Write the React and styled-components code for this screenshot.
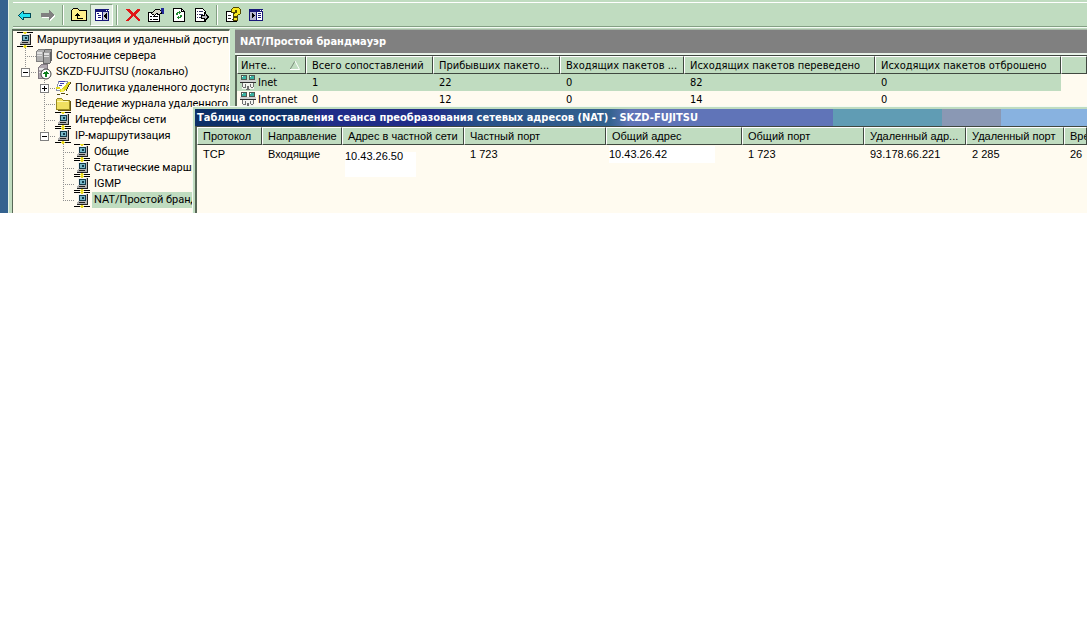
import React from "react";
import styled, { createGlobalStyle, css } from "styled-components";

const GlobalStyle = createGlobalStyle`
  * {
    box-sizing: border-box;
  }
  body {
    margin: 0;
    background: #fff;
    color: #000;
    font-family: "DejaVu Sans Condensed", "DejaVu Sans", sans-serif;
    font-size: 11px;
    line-height: 16px;
  }
`;

/* ICONS */
const Svg = ({ children }) => (
  <svg
    width="16"
    height="16"
    viewBox="0 0 16 16"
    shapeRendering="crispEdges"
    aria-hidden="true"
  >
    {children}
  </svg>
);

const BackIcon = () => (
  <Svg>
    <path d="M1 8h1v-1h1v-1h1v-1h1v-1h2v2h7v5h-7v2h-2v-1h-1v-1h-1v-1h-1v-1h-1z" fill="#004858" />
    <path d="M2 8h1v-1h1v-1h1v-1h1v2h7v3h-7v2h-1v-1h-1v-1h-1v-1h-1z" fill="#20e0f0" />
  </Svg>
);

const ForwardIcon = () => (
  <Svg>
    <path d="M15 9 L10 4 V7 H2 V11 H10 V14 Z" fill="#fff" />
    <path d="M14 8 L9 3 V6 H1 V10 H9 V13 Z" fill="#808080" />
  </Svg>
);

const UpIcon = () => (
  <Svg>
    <path d="M0.5 13.5 V3.5 L2.5 1.5 H6.5 L8.5 3.5 H15.5 V13.5 Z" fill="#fff08c" stroke="#000" />
    <path d="M4 8h1v-1h1v-1h1v1h1v1h1v1h-2v2h5v1h-6v-3h-2z" fill="#000" />
  </Svg>
);

const PaneIcon = ({ flip }) => (
  <Svg>
    <rect x="1" y="2" width="14" height="12" fill="#181878" />
    <path d="M12 3h1v1h-1zM14 3h1v1h-1z" fill="#fff" />
    {flip ? (
      <>
        <path d="M2 5h6v8h-6z" fill="#b8b8d0" />
        <path d="M9 5h5v8h-5z" fill="#fff" />
        <path d="M4 6h1v1h1v1h1v1h-1v1h-1v1h-1z" fill="#000" />
        <path d="M10 6h3v1h-3zM10 8h3v1h-3zM10 10h3v1h-3z" fill="#181878" />
      </>
    ) : (
      <>
        <path d="M2 5h6v8h-6z" fill="#fff" />
        <path d="M9 5h5v8h-5z" fill="#c8c8d8" />
        <path d="M3 6h2v1h-2zM4 8h3v1h-3zM4 10h3v1h-3z" fill="#181878" />
        <path d="M12 6h1v6h-1v-1h-1v-1h-1v-2h1v-1h1z" fill="#000" />
      </>
    )}
  </Svg>
);

const DeleteIcon = () => (
  <Svg>
    <path
      d="M1 2h3l4 4l4-4h3v1l-5 5l5 5v1h-2l-5-5l-5 5h-2v-1l5-5l-5-5z"
      fill="#e01818"
    />
  </Svg>
);

const PropertiesIcon = () => (
  <Svg>
    <path d="M0.5 5.5h11v9h-11z" fill="#fff" stroke="#000" />
    <path d="M2 9h2v1h-2zM5 9h5v1h-5zM2 12h2v1h-2zM5 12h5v1h-5z" fill="#000" />
    <path d="M3.5 6.5 L7.5 2.5 H11.5 L13.5 4.5 V6.5 L10.5 7.5 L8.5 6.5 L6.5 8.5 Z" fill="#d8d8c8" stroke="#000" />
    <path d="M13 1h3v6h-2v-2h-1z" fill="#202898" />
  </Svg>
);

const RefreshIcon = () => (
  <Svg>
    <path d="M2.5 1.5h8l3 3v10h-11z" fill="#fff" stroke="#000" />
    <path d="M10.5 1.5v3h3" fill="none" stroke="#000" />
    <path d="M5 8v-2h1v-1h2v-1h1v1h1v1h-1v1h-1v-1h-1v2zM11 8v2h-1v1h-2v1h-1v-1h-1v-1h1v-1h1v1h1v-2z" fill="#208830" />
  </Svg>
);

const ExportIcon = () => (
  <Svg>
    <path d="M1.5 1.5h7l3 3v10h-10z" fill="#fff" stroke="#000" />
    <path d="M3 4h1v1h-1zM5 4h4v1h-4zM3 7h1v1h-1zM5 7h4v1h-4zM3 10h1v1h-1zM5 10h3v1h-3z" fill="#303060" />
    <path d="M7.5 8.5h3v-3l4 4.5l-4 4v-2.5h-3z" fill="#b8b8c0" stroke="#000" />
  </Svg>
);

const HelpIcon = () => (
  <Svg>
    <path d="M1.5 4.5h10v10h-10z" fill="#fff" stroke="#000" />
    <path d="M3 8h3v1h-3zM3 11h3v1h-3zM7 12h3v1h-3z" fill="#303030" />
    <path
      d="M6.5 5.5v-3l2-2h5l2 2v4l-3 2v1h-4v-3l3-1v-2h-1v2z"
      fill="#f8e820"
      stroke="#504800"
    />
    <path d="M8.5 10.5h4v3h-4z" fill="#f8e820" stroke="#504800" />
  </Svg>
);

const NetworkIcon = () => (
  <Svg>
    <path d="M0 0h16v1h-16zM0 14h16v1h-16z" fill="#000" />
    <path d="M6 0h4v1h-4zM7 1h2v1h-2zM7 13h2v1h-2zM6 14h4v1h-4zM7 15h2v1h-2z" fill="#e8d820" />
    <path d="M4 2h9v8h-9z" fill="#b8b8b8" />
    <path d="M4 2h8v1h-8zM4 3h1v6h-1z" fill="#f0f0f0" />
    <path d="M5 3h7v6h-7z" fill="#103848" />
    <path d="M6 4h5v4h-5z" fill="#78b8c8" />
    <path d="M8 5h2v2h-2z" fill="#103848" />
    <path d="M13 2h1v8h-1z" fill="#202020" />
    <path d="M3 10h10v2h-10z" fill="#b0b0b0" />
    <path d="M5 10h6v1h-6zM3 12h11v1h-11zM13 10h1v2h-1z" fill="#202020" />
  </Svg>
);

const ServersIcon = () => (
  <Svg>
    <path d="M0.5 3.5l2-2h6v10l-2 2h-6z" fill="#b0b0b0" stroke="#808080" />
    <path d="M7.5 4.5l2-3h6v11l-2 3h-6z" fill="#a0a0a0" stroke="#686868" />
    <path d="M1 4h5v2h-5zM1 7h5v1h-5zM8 5h5v2h-5zM8 8h5v1h-5z" fill="#e0e0e0" />
    <path d="M14 4h1v9h-1z" fill="#606060" />
  </Svg>
);

const ServerIcon = () => (
  <Svg>
    <path d="M2.5 3.5l3-3h6v10l-3 4h-6z" fill="#b0a8b0" stroke="#807880" />
    <path d="M3 4h5v2h-5zM3 8h3v1h-3z" fill="#e8e8e8" />
    <circle cx="10" cy="10" r="5" fill="#fff" stroke="#404040" shapeRendering="auto" />
    <path d="M10 7h1v1h1v1h1v1h-2v3h-2v-3h-2v-1h1v-1h2z" fill="#108020" />
  </Svg>
);

const PolicyIcon = () => (
  <Svg>
    <path d="M3.5 1.5h9l-3 9h-8z" fill="#fff" stroke="#8890a8" />
    <path d="M4 1h6v1h-6zM5 3h4v1h-4zM4 5h3v1h-3z" fill="#4040b0" />
    <path d="M1 7h4v2h2l6-7h2v2l-6 8h-4v-3h-4z" fill="#e0d820" />
    <path d="M6 9h3v3h-3z" fill="#f8f060" />
    <path d="M15 2h1v2h-1v1h-1v2h-1v2h-1v2h-1v-2h1v-2h1v-2h1v-1h1zM2 14h3v1h-3zM6 13h4v1h-4zM11 14h2v1h-2z" fill="#504810" />
  </Svg>
);

const FolderIcon = () => (
  <Svg>
    <path d="M1.5 13.5v-10l1-1h4l2 2h6v9z" fill="#f0e060" stroke="#988820" />
    <path d="M2 5h11v1h-11z" fill="#fff8b0" />
    <path d="M15 5h1v10h-13v-1h12z" fill="#605010" />
  </Svg>
);

const InterfaceIcon = () => (
  <Svg>
    <path d="M1 0h6v5h-6zM9 0h6v5h-6z" fill="#505850" />
    <path d="M2 1h4v3h-4zM10 1h4v3h-4z" fill="#38b0a0" />
    <path d="M2 1h1v1h-1zM10 1h1v1h-1z" fill="#fff" />
    <path d="M0 5h16v2h-16z" fill="#d0d0d0" />
    <path d="M0 7h16v1h-16z" fill="#303030" />
    <path d="M2 8h12v6h-12z" fill="#f4f4f0" />
    <path d="M2 8h1v4h-1zM13 8h1v4h-1zM5 9h1v3h-1zM10 9h1v3h-1zM3 12h3v1h-3zM11 12h2v1h-2zM7 11h2v3h-2zM6 14h4v1h-4z" fill="#707070" />
  </Svg>
);

const SortArrow = () => (
  <svg width="10" height="9" viewBox="0 0 10 9" aria-hidden="true">
    <path d="M5 0 L0 8.5" stroke="#7c8c7c" fill="none" />
    <path d="M5 0 L9.5 8.5 H0" stroke="#fff" fill="none" />
  </svg>
);

/* DATA */
const tools = [
  { label: "Назад", icon: <BackIcon /> },
  { label: "Вперед", icon: <ForwardIcon /> },
  null,
  { label: "Вверх", icon: <UpIcon /> },
  { label: "Дерево консоли", icon: <PaneIcon />, pressed: true },
  null,
  { label: "Удалить", icon: <DeleteIcon /> },
  { label: "Свойства", icon: <PropertiesIcon /> },
  { label: "Обновить", icon: <RefreshIcon /> },
  { label: "Экспорт", icon: <ExportIcon /> },
  null,
  { label: "Справка", icon: <HelpIcon /> },
  { label: "Панель действий", icon: <PaneIcon flip /> },
];

const nodes = [
  { level: 0, text: "Маршрутизация и удаленный доступ", icon: <NetworkIcon /> },
  { level: 1, text: "Состояние сервера", icon: <ServersIcon /> },
  { level: 1, text: "SKZD-FUJITSU (локально)", icon: <ServerIcon />, toggle: "-", last: true },
  { level: 2, text: "Политика удаленного доступа", icon: <PolicyIcon />, toggle: "+" },
  { level: 2, text: "Ведение журнала удаленного", icon: <FolderIcon /> },
  { level: 2, text: "Интерфейсы сети", icon: <NetworkIcon /> },
  { level: 2, text: "IP-маршрутизация", icon: <NetworkIcon />, toggle: "-", last: true },
  { level: 3, text: "Общие", icon: <NetworkIcon /> },
  { level: 3, text: "Статические маршруты", icon: <NetworkIcon /> },
  { level: 3, text: "IGMP", icon: <NetworkIcon /> },
  { level: 3, text: "NAT/Простой брандмауэр", icon: <NetworkIcon />, last: true, selected: true },
];

const interfaceColumns = [
  { title: "Инте...", width: 69, sorted: true },
  { title: "Всего сопоставлений", width: 127 },
  { title: "Прибывших пакето...", width: 127 },
  { title: "Входящих пакетов ...", width: 124 },
  { title: "Исходящих пакетов переведено", width: 191 },
  { title: "Исходящих пакетов отброшено", width: 186 },
  { title: "" },
];

const interfaces = [
  { name: "Inet", values: [1, 22, 0, 82, 0], selected: true },
  { name: "Intranet", values: [0, 12, 0, 14, 0] },
];

const sessionColumns = [
  { title: "Протокол", width: 65 },
  { title: "Направление", width: 80 },
  { title: "Адрес в частной сети", width: 122 },
  { title: "Частный порт", width: 142 },
  { title: "Общий адрес", width: 136 },
  { title: "Общий порт", width: 122 },
  { title: "Удаленный адр...", width: 102 },
  { title: "Удаленный порт", width: 98 },
  { title: "Время" },
];

const App = () => {
  return (
    <>
      <GlobalStyle />
      <Desktop>
        <Console>
          <Toolbar role="toolbar">
            {tools.map((tool, i) =>
              tool ? (
                <ToolButton key={i} aria-label={tool.label} $pressed={tool.pressed}>
                  {tool.icon}
                </ToolButton>
              ) : (
                <Separator key={i} />
              )
            )}
          </Toolbar>
          <Panes>
            <Tree>
              {nodes.map((node) => (
                <TreeRow key={node.text}>
                  {node.level > 1 && <Indent $levels={node.level - 1} />}
                  {node.level > 0 && (
                    <Branch $last={node.last}>
                      {node.toggle && (
                        <Toggle
                          aria-label={node.text}
                          aria-expanded={node.toggle === "-"}
                          $closed={node.toggle === "+"}
                        />
                      )}
                    </Branch>
                  )}
                  {node.icon}
                  <NodeLabel $selected={node.selected}>{node.text}</NodeLabel>
                </TreeRow>
              ))}
            </Tree>
            <Details>
              <DetailsTitle>NAT/Простой брандмауэр</DetailsTitle>
              <ListView>
                <colgroup>
                  {interfaceColumns.map((c) => (
                    <col key={c.title} width={c.width} />
                  ))}
                </colgroup>
                <thead>
                  <tr>
                    {interfaceColumns.map((c) => (
                      <HeadCell key={c.title} $sorted={c.sorted}>
                        {c.sorted ? (
                          <SortedTitle>
                            {c.title}
                            <SortArrow />
                          </SortedTitle>
                        ) : (
                          c.title
                        )}
                      </HeadCell>
                    ))}
                  </tr>
                </thead>
                <tbody>
                  {interfaces.map((row) => (
                    <tr key={row.name}>
                      <NameCell $selected={row.selected}>
                        <IconLabel>
                          <InterfaceIcon />
                          {row.name}
                        </IconLabel>
                      </NameCell>
                      {row.values.map((value, i) => (
                        <Cell key={i} $selected={row.selected}>
                          {value}
                        </Cell>
                      ))}
                      <Cell />
                    </tr>
                  ))}
                </tbody>
              </ListView>
            </Details>
          </Panes>
        </Console>

        <SessionWindow>
          <TitleBar>
            Таблица сопоставления сеанса преобразования сетевых адресов (NAT) - SKZD-FUJITSU
          </TitleBar>
          <SessionList>
            <colgroup>
              {sessionColumns.map((c) => (
                <col key={c.title} width={c.width} />
              ))}
            </colgroup>
            <thead>
              <tr>
                {sessionColumns.map((c) => (
                  <HeadCell key={c.title}>{c.title}</HeadCell>
                ))}
              </tr>
            </thead>
            <tbody>
              <tr>
                <Cell>TCP</Cell>
                <Cell>Входящие</Cell>
                <PatchCell>
                  <PrivateAddress>10.43.26.50</PrivateAddress>
                </PatchCell>
                <Cell>1 723</Cell>
                <PatchCell>
                  <PublicAddress>10.43.26.42</PublicAddress>
                </PatchCell>
                <Cell>1 723</Cell>
                <Cell>93.178.66.221</Cell>
                <Cell>2 285</Cell>
                <Cell>26</Cell>
              </tr>
            </tbody>
          </SessionList>
        </SessionWindow>
      </Desktop>
    </>
  );
};

const Desktop = styled.div`
  position: relative;
  padding-left: 8px;
  background: #34628f;
  overflow: hidden;
`;

const Console = styled.div`
  padding: 2px 0 0 4px;
  background: #c0dcc0;
  border-left: 1px solid #e4f2e4;
`;

const Toolbar = styled.div`
  display: flex;
  align-items: center;
  height: 25px;
  margin-bottom: 2px;
  border-top: 1px solid #fff;
  border-bottom: 1px solid #84a084;
  box-shadow: 0 1px 0 #f4fbf4;
`;

const ToolButton = styled.button`
  display: flex;
  align-items: center;
  justify-content: center;
  width: 23px;
  height: 22px;
  padding: 0;
  border: 1px solid transparent;
  background: transparent;

  ${(p) =>
    p.$pressed &&
    css`
      border-color: #84a084 #fff #fff #84a084;
      background: #e2efe2;
    `}
`;

const Separator = styled.span`
  width: 2px;
  height: 20px;
  margin: 0 3px;
  border-left: 1px solid #84a084;
  border-right: 1px solid #fff;
`;

const Panes = styled.div`
  display: grid;
  grid-template-columns: 217px minmax(0, 1fr);
  column-gap: 5px;
`;

const Tree = styled.ul`
  margin: 0;
  padding: 1px 0 5px 4px;
  list-style: none;
  background: #fffbf0;
  border-top: 2px solid #586858;
  border-right: 1px solid #fff;
  box-shadow: -1px 0 0 #586858;
  font-family: Roboto, sans-serif;
  overflow: hidden;
`;

const TreeRow = styled.li`
  display: flex;
  align-items: center;
  height: 16px;
  white-space: nowrap;

  svg {
    flex: none;
  }
`;

const Indent = styled.span`
  flex: none;
  width: ${(p) => p.$levels * 19}px;
`;

/* dotted connector, the lower half is covered for the last child */
const Branch = styled.span`
  display: flex;
  flex: none;
  align-items: center;
  width: 19px;
  height: 16px;
  padding-left: 4px;
  background-image: ${(p) =>
      p.$last
        ? "linear-gradient(#fffbf0, #fffbf0)"
        : "linear-gradient(transparent, transparent)"},
    linear-gradient(#fffbf0, #fffbf0),
    linear-gradient(#909090 50%, transparent 50%),
    linear-gradient(90deg, #909090 50%, transparent 50%);
  background-size: 100% 8px, 8px 100%, 1px 2px, 2px 1px;
  background-position: 0 9px, 0 0, 8px 0, 8px 8px;
  background-repeat: no-repeat, no-repeat, repeat-y, repeat-x;
`;

const Toggle = styled.button`
  width: 9px;
  height: 9px;
  padding: 0;
  border: 1px solid #808080;
  background: linear-gradient(#000, #000) 1px 3px / 5px 1px no-repeat,
    ${(p) => p.$closed && "linear-gradient(#000, #000) 3px 1px / 1px 5px no-repeat,"}
    linear-gradient(#fff, #fff);
`;

const NodeLabel = styled.span`
  margin-left: 2px;
  padding: 0 2px;
  background: ${(p) => (p.$selected ? "#c0dcc0" : "transparent")};
`;

const Details = styled.section`
  min-width: 0;
  background: #fffbf0;
`;

const DetailsTitle = styled.h2`
  height: 26px;
  margin: 0;
  padding: 0 5px;
  background: #808080;
  border-top: 1px solid #a8b8a8;
  border-bottom: 2px solid #e8f2e8;
  color: #fff;
  font-size: 11px;
  line-height: 24px;
`;

const ListView = styled.table`
  width: 100%;
  table-layout: fixed;
  border-collapse: separate;
  border-spacing: 0;
  border-top: 1px solid #404840;
  border-left: 2px solid #586858;
`;

const HeadCell = styled.th`
  height: 18px;
  padding: 1px 0 0 ${(p) => (p.$sorted ? 3 : 5)}px;
  background: #c0dcc0;
  border-top: 1px solid #fff;
  border-left: 1px solid #fff;
  border-right: 1px solid #404840;
  border-bottom: 1px solid #404840;
  font-weight: normal;
  line-height: 15px;
  text-align: left;
  white-space: nowrap;
  overflow: hidden;
`;

const SortedTitle = styled.span`
  display: flex;
  align-items: center;
  justify-content: space-between;
  padding-right: 5px;
`;

const Cell = styled.td`
  height: 17px;
  padding: 1px 0 0 6px;
  background: ${(p) => (p.$selected ? "#c0dcc0" : "transparent")};
  vertical-align: top;
  white-space: nowrap;
`;

const NameCell = styled(Cell)`
  padding-left: 3px;
`;

const IconLabel = styled.span`
  display: flex;
  align-items: center;
  gap: 2px;
`;

const SessionWindow = styled.section`
  position: absolute;
  top: 106px;
  left: 192px;
  right: 0;
  bottom: 0;
  padding: 3px 0 0 3px;
  background: #c0dcc0;
  box-shadow: inset 1px 1px 0 #f4fbf4;
  display: flex;
  flex-direction: column;
  overflow: hidden;

  &::after {
    content: "";
    flex: 1;
    background: #fffbf0;
    border-left: 2px solid #586858;
  }
`;

const TitleBar = styled.h2`
  flex: none;
  height: 17px;
  margin: 0;
  padding-left: 2px;
  background: linear-gradient(
    90deg,
    #0c3068 0 115px,
    #202c88 125px 235px,
    #285088 285px,
    #34628f 415px,
    #6074b8 435px 638px,
    #609cb4 638px 747px,
    #8a98b4 747px 806px,
    #88b2e0 806px
  );
  color: #fff;
  font-size: 11px;
  line-height: 18px;
  white-space: nowrap;
`;

const SessionList = styled(ListView)`
  flex: none;
  background: #fffbf0;
  border-top: 1px solid #404840;
  font-family: "Liberation Sans", sans-serif;
`;

const PatchCell = styled(Cell)`
  padding-left: 3px;
`;

const PrivateAddress = styled.span`
  display: block;
  width: 71px;
  height: 31px;
  padding-top: 2px;
  background: linear-gradient(#fff, #fff) 0 6px no-repeat;
`;

const PublicAddress = styled.span`
  display: block;
  width: 106px;
  height: 17px;
  background: #fff;
`;

export default App;
